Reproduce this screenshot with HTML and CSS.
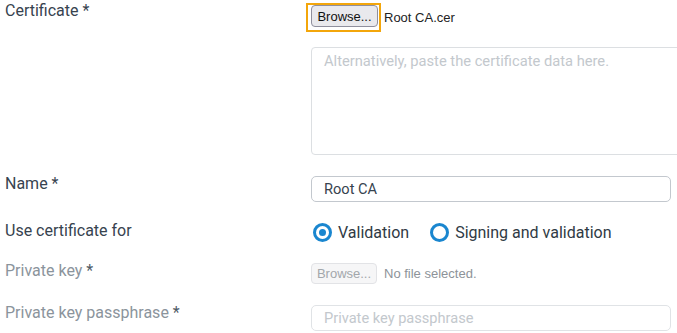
FILE: index.html
```html
<!DOCTYPE html>
<html lang="en">
<head>
    <meta charset="UTF-8">
    <title>Add certificate</title>
    <link rel="stylesheet" href="styles.css">
</head>
<body>
    <form class="cert-form">
        <div class="form-row first">
            <label class="field-label">Certificate *</label>
            <div class="field-control">
                <div class="file-line">
                    <span class="focus-ring"><button type="button" class="browse">Browse...</button></span>
                    <span class="file-name">Root CA.cer</span>
                </div>
                <textarea class="cert-data" placeholder="Alternatively, paste the certificate data here."></textarea>
            </div>
        </div>
        <div class="form-row">
            <label class="field-label">Name *</label>
            <div class="field-control">
                <input type="text" class="text-input" value="Root CA">
            </div>
        </div>
        <div class="form-row">
            <label class="field-label">Use certificate for</label>
            <div class="field-control radio-group">
                <span class="radio checked"></span>
                <span class="radio-text">Validation</span>
                <span class="radio"></span>
                <span class="radio-text">Signing and validation</span>
            </div>
        </div>
        <div class="form-row disabled">
            <label class="field-label">Private key <span class="req">*</span></label>
            <div class="field-control">
                <div class="file-line">
                    <button type="button" class="browse" disabled>Browse...</button>
                    <span class="file-name">No file selected.</span>
                </div>
            </div>
        </div>
        <div class="form-row disabled">
            <label class="field-label">Private key passphrase <span class="req">*</span></label>
            <div class="field-control">
                <input type="password" class="text-input" placeholder="Private key passphrase" disabled>
            </div>
        </div>
    </form>
</body>
</html>
```

FILE: styles.css
```css
html, body {
    margin: 0;
    padding: 0;
    background: #fff;
    overflow: hidden;
}
body {
    font-family: Roboto, "Liberation Sans", sans-serif;
    color: #37434f;
}
.cert-form {
    padding: 3px 0 0 5px;
}
.form-row {
    display: flex;
    align-items: flex-start;
    margin-top: 21px;
}
.form-row.first {
    margin-top: 0;
}
.field-label {
    width: 306px;
    flex: none;
    font-size: 16px;
    line-height: 16px;
    color: #37434f;
}
.form-row.disabled .field-label {
    color: #8b949c;
}
.form-row.disabled .field-label .req {
    color: #505b66;
}
.field-control {
    flex: none;
    width: 380px;
}
.file-line {
    display: flex;
    align-items: center;
}
.focus-ring {
    display: inline-block;
    margin-left: -5px;
    padding: 0 1px 3px 3px;
    border: 2px solid #f3a60b;
}
.browse {
    display: block;
    width: 67px;
    height: 22px;
    padding: 0;
    font-family: "Liberation Sans", Arial, sans-serif;
    font-size: 13px;
    color: #111;
    background: #e9e9ed;
    border: 1px solid #8f8f9d;
    border-radius: 4px;
}
.browse:disabled {
    width: 66px;
    height: 21px;
    color: #a3a7ab;
    background: #f6f6f7;
    border-color: #e2e3e6;
}
.file-name {
    margin-left: 3px;
    font-family: "Liberation Sans", Arial, sans-serif;
    font-size: 13px;
    color: #222;
}
.disabled .file-name {
    margin-left: 7px;
    color: #8d9399;
}
.cert-data {
    display: block;
    box-sizing: border-box;
    width: 380px;
    height: 108px;
    margin-top: 15px;
    padding: 4px 12px;
    font-family: Roboto, sans-serif;
    font-size: 14.7px;
    border: 1px solid #dcdfe2;
    border-radius: 4px;
    resize: none;
}
.cert-data::placeholder,
.text-input::placeholder {
    color: #c3c8cd;
}
.text-input {
    display: block;
    box-sizing: border-box;
    width: 360px;
    height: 26px;
    padding: 0 12px;
    font-family: Roboto, sans-serif;
    font-size: 14.6px;
    color: #37434f;
    background: #fff;
    border: 1px solid #c3c8ce;
    border-radius: 5px;
}
.text-input:disabled {
    border-color: #e0e3e6;
}
.radio-group {
    display: flex;
    align-items: center;
    height: 19px;
    margin-left: 2px;
}
.radio {
    box-sizing: border-box;
    width: 19px;
    height: 19px;
    border: 3px solid #1a86cf;
    border-radius: 50%;
    position: relative;
    flex: none;
}
.radio.checked::after {
    content: "";
    position: absolute;
    left: 3px;
    top: 3px;
    width: 7px;
    height: 7px;
    border-radius: 50%;
    background: #1a86cf;
}
.radio-text {
    margin-left: 6px;
    margin-right: 21px;
    font-size: 16px;
    line-height: 17px;
    color: #2f3a44;
}
```
